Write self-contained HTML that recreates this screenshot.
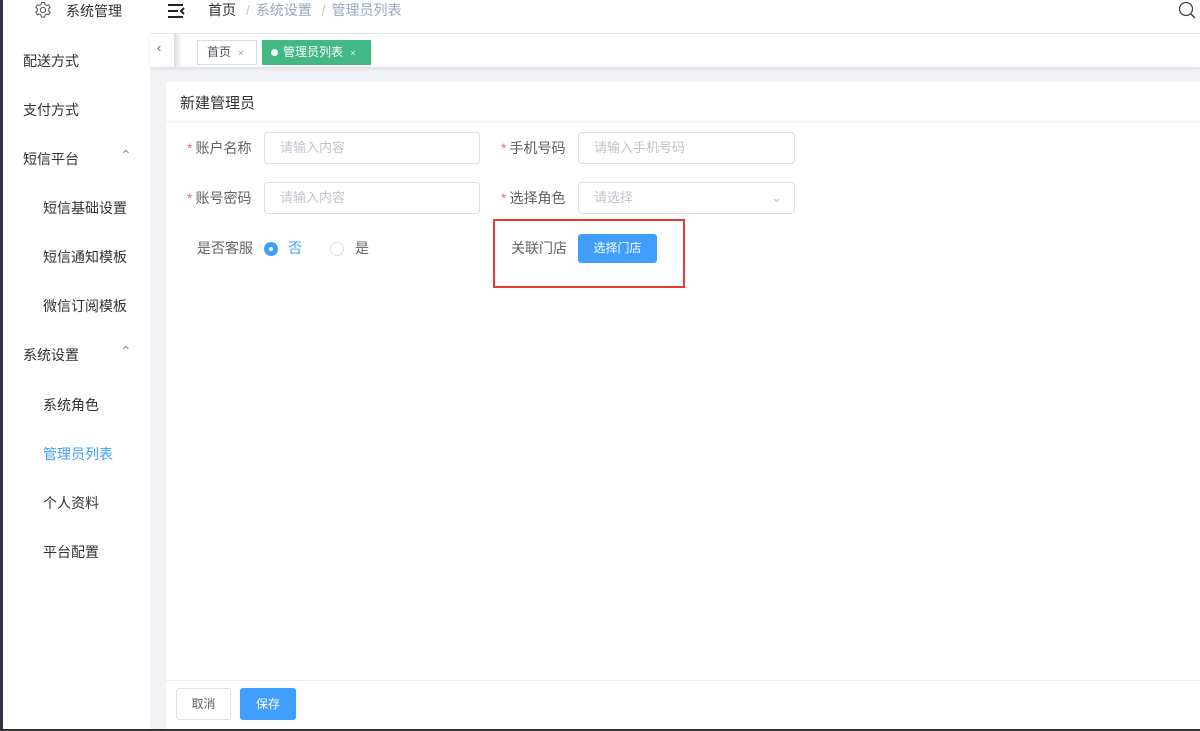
<!DOCTYPE html><html><head><meta charset="utf-8"><style>
*{margin:0;padding:0;box-sizing:border-box}
body{width:1200px;height:731px;overflow:hidden;position:relative;background:#f0f2f5;font-family:"Liberation Sans","Noto Sans CJK SC",sans-serif;font-size:14px;color:#606266}
.a{position:absolute}
.side{left:0;top:0;width:150px;height:731px;background:#fff;border-left:3px solid #2f3442}
.side div{position:absolute;font-size:14px;color:#303133}
.hdr{left:150px;top:0;width:1050px;height:34px;background:#fff;border-bottom:1px solid #e6e6e6}
.tabs{left:150px;top:34px;width:1050px;height:33px;background:#fff;box-shadow:0 2px 3px rgba(0,0,0,.08)}
.card{left:166px;top:82px;width:1034px;height:647px;background:#fff}
.inp{position:absolute;height:32px;border:1px solid #dcdfe6;border-radius:4px;padding-left:15px;line-height:30px;color:#c0c4cc;font-size:13px;background:#fff}
.lab{position:absolute;font-size:14px;color:#606266}
.lab b{color:#f56c6c;font-weight:normal;margin-right:3px}
.bot{left:0;top:729px;width:1200px;height:2px;background:#333}
</style></head><body>
<div class="a side">
<svg class="a" style="left:31px;top:1px" width="18" height="18" viewBox="0 0 18 18"><circle cx="9" cy="9" r="2.6" fill="none" stroke="#555" stroke-width="1"/><path d="M7.5 1.5h3l.5 2 1.7 1 2-.7 1.5 2.6-1.5 1.4v2l1.5 1.4-1.5 2.6-2-.7-1.7 1-.5 2h-3l-.5-2-1.7-1-2 .7-1.5-2.6 1.5-1.4v-2L1.8 6.4l1.5-2.6 2 .7 1.7-1z" fill="none" stroke="#555" stroke-width="1"/></svg>
<div style="left:63px;top:1px">系统管理</div>
<div style="left:20px;top:51px">配送方式</div>
<div style="left:20px;top:100px">支付方式</div>
<div style="left:20px;top:149px">短信平台</div><div style="left:117px;top:147px;color:#909399">⌃</div>
<div style="left:40px;top:198px">短信基础设置</div>
<div style="left:40px;top:247px">短信通知模板</div>
<div style="left:40px;top:296px">微信订阅模板</div>
<div style="left:20px;top:345px">系统设置</div><div style="left:117px;top:343px;color:#909399">⌃</div>
<div style="left:40px;top:395px">系统角色</div>
<div style="left:40px;top:444px;color:#409eff">管理员列表</div>
<div style="left:40px;top:493px">个人资料</div>
<div style="left:40px;top:542px">平台配置</div>
</div>
<div class="a hdr">
<svg class="a" style="left:17px;top:3px" width="18" height="16" viewBox="0 0 18 16"><path d="M1 2h15M1 8h10M1 14h15M17 5l-3 3 3 3" stroke="#222" stroke-width="2" fill="none"/></svg>
<div class="a" style="left:58px;top:0px;color:#303133">首页 <span style="color:#c0c4cc;margin:0 6px">/</span><span style="color:#97a8be">系统设置</span> <span style="color:#c0c4cc;margin:0 6px">/</span><span style="color:#97a8be">管理员列表</span></div>
<svg class="a" style="left:1028px;top:1px" width="20" height="20" viewBox="0 0 20 20"><circle cx="8" cy="8" r="6.5" fill="none" stroke="#444" stroke-width="1.3"/><path d="M13 13l4 4" stroke="#444" stroke-width="1.5"/></svg>
</div>
<div class="a tabs">
<div class="a" style="left:7px;top:6px;color:#666;font-size:13px">‹</div>
<div class="a" style="left:24px;top:0;width:8px;height:33px;background:linear-gradient(90deg,#ddd,#fff)"></div>
<div class="a" style="left:47px;top:6px;width:60px;height:25px;border:1px solid #d8dce5;font-size:12px;color:#495060;line-height:23px;padding-left:9px">首页 <span style="font-size:9px;color:#999;margin-left:4px">×</span></div>
<div class="a" style="left:112px;top:6px;width:109px;height:25px;background:#42b983;font-size:12px;color:#fff;line-height:25px;padding-left:9px"><span style="display:inline-block;width:7px;height:7px;border-radius:50%;background:#fff;margin-right:5px"></span>管理员列表 <span style="font-size:9px;margin-left:4px">×</span></div>
</div>
<div class="a card">
<div class="a" style="left:14px;top:10px;font-size:15px;color:#303133">新建管理员</div>
<div class="a" style="left:0;top:39px;width:1034px;height:1px;background:#ebeef5"></div>
<div class="lab" style="left:21px;top:56px"><b>*</b>账户名称</div>
<div class="inp" style="left:98px;top:50px;width:216px">请输入内容</div>
<div class="lab" style="left:335px;top:56px"><b>*</b>手机号码</div>
<div class="inp" style="left:412px;top:50px;width:217px">请输入手机号码</div>
<div class="lab" style="left:21px;top:106px"><b>*</b>账号密码</div>
<div class="inp" style="left:98px;top:100px;width:216px">请输入内容</div>
<div class="lab" style="left:335px;top:106px"><b>*</b>选择角色</div>
<div class="inp" style="left:412px;top:100px;width:217px">请选择<span style="position:absolute;right:12px;top:0;color:#c0c4cc">⌄</span></div>
<div class="lab" style="left:31px;top:156px">是否客服</div>
<div class="a" style="left:98px;top:160px;width:14px;height:14px;border-radius:50%;background:#409eff"><div class="a" style="left:5px;top:5px;width:4px;height:4px;border-radius:50%;background:#fff"></div></div>
<div class="a" style="left:122px;top:156px;color:#409eff">否</div>
<div class="a" style="left:164px;top:160px;width:14px;height:14px;border-radius:50%;border:1px solid #dcdfe6"></div>
<div class="a" style="left:189px;top:156px;color:#606266">是</div>
<div class="a" style="left:327px;top:137px;width:192px;height:69px;border:2px solid #e53935"></div>
<div class="lab" style="left:345px;top:156px">关联门店</div>
<div class="a" style="left:412px;top:152px;width:79px;height:29px;background:#409eff;border-radius:3px;color:#fff;font-size:12px;text-align:center;line-height:29px">选择门店</div>
<div class="a" style="left:0;top:598px;width:1034px;height:1px;background:#ebeef5"></div>
<div class="a" style="left:10px;top:606px;width:55px;height:32px;border:1px solid #dcdfe6;border-radius:3px;font-size:12px;color:#606266;text-align:center;line-height:30px">取消</div>
<div class="a" style="left:74px;top:606px;width:56px;height:32px;background:#409eff;border-radius:3px;font-size:12px;color:#fff;text-align:center;line-height:32px">保存</div>
</div>
<div class="a bot"></div>
</body></html>
